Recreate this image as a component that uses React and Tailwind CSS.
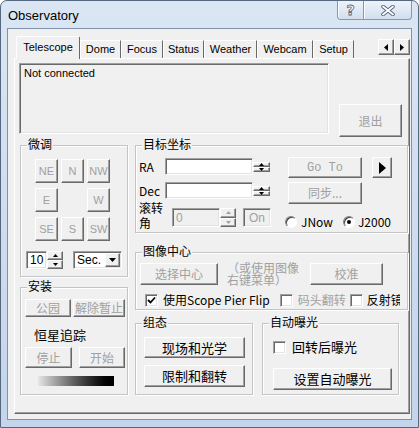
import React from "react";

const LAT = "font-['Liberation_Sans',Arial,sans-serif]";
const CJK = "font-['Noto_Sans_CJK_SC','Liberation_Sans',sans-serif]";

function Raised({ className = "", children }) {
  return (
    <div
      className={`flex items-center justify-center border border-t-white border-l-white border-r-[#696969] border-b-[#696969] bg-[#f0f0f0] shadow-[inset_-1px_-1px_0_#a0a0a0] ${className}`}
    >
      {children}
    </div>
  );
}

function Sunken({ className = "", children }) {
  return (
    <div
      className={`border border-t-[#a0a0a0] border-l-[#a0a0a0] border-r-white border-b-white shadow-[inset_1px_1px_0_#696969,inset_-1px_-1px_0_#e3e3e3] ${className}`}
    >
      {children}
    </div>
  );
}

function Spinner({ className = "", color = "#000" }) {
  return (
    <div className={`flex flex-col ${className}`}>
      <Raised className="flex-1">
        <svg width="5" height="3" viewBox="0 0 5 3">
          <path d="M0 3 L2.5 0 L5 3Z" fill={color} />
        </svg>
      </Raised>
      <Raised className="flex-1">
        <svg width="5" height="3" viewBox="0 0 5 3">
          <path d="M0 0 L2.5 3 L5 0Z" fill={color} />
        </svg>
      </Raised>
    </div>
  );
}

function Check({ checked = false }) {
  return (
    <Sunken className="flex h-[13px] w-[13px] shrink-0 items-center justify-center bg-white">
      {checked && (
        <svg width="9" height="9" viewBox="0 0 9 9">
          <path d="M1 4 L3.5 6.5 L8 1.5" stroke="#000" strokeWidth="1.8" fill="none" />
        </svg>
      )}
    </Sunken>
  );
}

function Radio({ checked = false }) {
  return (
    <div className="flex h-[12px] w-[12px] shrink-0 items-center justify-center rounded-full border border-t-[#808080] border-l-[#808080] border-r-white border-b-white bg-white shadow-[inset_1px_1px_0_#404040]">
      {checked && <div className="h-[4px] w-[4px] rounded-full bg-black" />}
    </div>
  );
}

function Group({ label, className = "", children }) {
  return (
    <div
      className={`relative border border-[#c4c4c4] shadow-[inset_1px_1px_0_#fff,1px_1px_0_#fff] ${className}`}
    >
      <div
        className={`absolute left-[6px] top-[-10px] bg-[#f0f0f0] px-[1px] text-[12px] leading-[16px] text-black ${CJK}`}
      >
        {label}
      </div>
      {children}
    </div>
  );
}

const dis = "text-[#a0a0a0]";

function Tab({ label, w }) {
  return (
    <div
      className={`flex h-[18px] items-start justify-center border-t border-l border-r border-t-white border-l-white border-r-[#696969] pt-[2px] text-[11px] leading-[13px] ${w}`}
    >
      {label}
    </div>
  );
}

export default function App() {
  return (
    <div className="flex h-[428px] w-[419px] flex-col rounded-t-[7px] border border-[#56687f] bg-linear-to-b from-[#dbe6f4] to-[#c4d4ea] px-[6px] pb-[7px] text-black">
      {/* title bar */}
      <div className="-mx-[6px] flex h-[27px] items-start">
        <div className={`ml-[7px] mt-[7px] text-[13px] leading-[15px] ${LAT}`}>Observatory</div>
        <div className="ml-auto mr-[6px] flex">
          <div className="flex h-[19px] w-[27px] items-center justify-center rounded-bl-[4px] border border-t-0 border-[#8797b0] bg-linear-to-b from-[#eef3fa] to-[#d3dfee] shadow-[inset_1px_0_0_#f8fbff]">
            <span className="font-['DejaVu_Sans',sans-serif] text-[14px] font-bold leading-[14px] text-white [-webkit-text-stroke:0.8px_#55657e]">
              ?
            </span>
          </div>
          <div className="flex h-[19px] w-[48px] items-center justify-center rounded-br-[4px] border border-t-0 border-l-0 border-[#8797b0] bg-linear-to-b from-[#eef3fa] to-[#d3dfee] shadow-[inset_1px_0_0_#f8fbff]">
            <svg width="14" height="11" viewBox="0 0 14 11">
              <path d="M2 1.5 L12 9.5 M12 1.5 L2 9.5" stroke="#55657e" strokeWidth="3.6" strokeLinecap="round" />
              <path d="M2 1.5 L12 9.5 M12 1.5 L2 9.5" stroke="#ffffff" strokeWidth="1.8" strokeLinecap="round" />
            </svg>
          </div>
        </div>
      </div>

      {/* client */}
      <div className="flex flex-1 flex-col border border-[#7f91ab] bg-[#f0f0f0] pl-[6px] pt-[7px]">
        {/* tab strip */}
        <div className={`flex h-[22px] w-[396px] items-end ${LAT}`}>
          <div className="relative z-10 mb-[-1px] ml-[2px] flex h-[23px] w-[64px] items-start justify-center rounded-t-[2px] border-t border-l border-r border-t-white border-l-white border-r-[#696969] bg-[#f0f0f0] pt-[4px] text-[11px] leading-[13px]">
            Telescope
          </div>
          <Tab label="Dome" w="w-[41px]" />
          <Tab label="Focus" w="w-[42px]" />
          <Tab label="Status" w="w-[41px]" />
          <Tab label="Weather" w="w-[53px]" />
          <Tab label="Webcam" w="w-[56px]" />
          <Tab label="Setup" w="w-[41px]" />
          <div className="mb-[3px] ml-auto flex">
            <Raised className="h-[16px] w-[16px]">
              <svg width="4" height="7" viewBox="0 0 4 7">
                <path d="M4 0 L0 3.5 L4 7Z" fill="#000" />
              </svg>
            </Raised>
            <Raised className="h-[16px] w-[16px]">
              <svg width="4" height="7" viewBox="0 0 4 7">
                <path d="M0 0 L4 3.5 L0 7Z" fill="#000" />
              </svg>
            </Raised>
          </div>
        </div>

        {/* panel */}
        <div className="flex h-[356px] w-[396px] flex-col border border-t-white border-l-white border-r-[#696969] border-b-[#696969] shadow-[inset_-1px_-1px_0_#a0a0a0]">
          {/* row 1 */}
          <div className="flex h-[79px] items-start">
            <Sunken className={`ml-[4px] mt-[4px] h-[71px] w-[310px] px-[4px] pt-[2px] text-[11px] leading-[14px] ${LAT}`}>
              Not connected
            </Sunken>
            <Raised className={`ml-[10px] mt-[45px] h-[33px] w-[63px] text-[12px] ${dis} ${CJK}`}>退出</Raised>
          </div>

          {/* row 2 */}
          <div className="ml-[5px] flex gap-[7px]">
            {/* left column */}
            <div className="flex w-[108px] flex-col">
              <Group label="微调" className="mt-[7px] h-[132px]">
                <div className={`ml-[14px] mt-[13px] grid grid-cols-[23px_23px_23px] grid-rows-[24px_24px_24px] gap-x-[3px] gap-y-[5px] text-[11px] ${dis} ${LAT}`}>
                  <Raised>NE</Raised>
                  <Raised>N</Raised>
                  <Raised>NW</Raised>
                  <Raised>E</Raised>
                  <div />
                  <Raised>W</Raised>
                  <Raised>SE</Raised>
                  <Raised>S</Raised>
                  <Raised>SW</Raised>
                </div>
                <div className={`ml-[5px] mt-[10px] flex h-[18px] text-[12px] ${LAT}`}>
                  <Sunken className="flex w-[21px] items-center bg-white pl-[3px] leading-[14px]">10</Sunken>
                  <Spinner className="w-[16px]" />
                  <Sunken className="ml-[10px] flex w-[49px] items-center bg-white pl-[3px] leading-[14px]">
                    Sec.
                    <Raised className="my-[1px] ml-auto mr-[1px] h-[14px] w-[15px]">
                      <svg width="7" height="4" viewBox="0 0 7 4">
                        <path d="M0 0 L3.5 4 L7 0Z" fill="#000" />
                      </svg>
                    </Raised>
                  </Sunken>
                </div>
              </Group>

              <Group label="安装" className="mt-[10px] h-[108px]">
                <div className={`ml-[4px] mt-[11px] flex gap-[2px] text-[12px] ${dis} ${CJK}`}>
                  <Raised className="h-[18px] w-[46px]">公园</Raised>
                  <Raised className="h-[18px] w-[52px]">解除暂止</Raised>
                </div>
                <div className={`ml-[13px] mt-[10px] text-[13px] leading-[16px] ${CJK}`}>恒星追踪</div>
                <div className={`ml-[4px] mt-[4px] flex gap-[7px] text-[12px] ${dis} ${CJK}`}>
                  <Raised className="h-[21px] w-[47px]">停止</Raised>
                  <Raised className="h-[21px] w-[46px]">开始</Raised>
                </div>
                <div className="ml-[17px] mt-[8px] h-[10px] w-[76px] bg-linear-to-r from-[#e6e6e6] to-black" />
              </Group>
            </div>

            {/* right column */}
            <div className="flex w-[273px] flex-col">
              <Group label="目标坐标" className="mt-[7px] flex h-[88px]">
                <div className={`ml-[3px] flex w-[133px] flex-col text-[12px] ${CJK}`}>
                  <div className="mt-[12px] flex h-[17px] items-center">
                    <span className="w-[26px] leading-[14px]">RA</span>
                    <Sunken className="h-full w-[88px] bg-white" />
                    <Spinner className="w-[17px]" />
                  </div>
                  <div className="mt-[7px] flex h-[17px] items-center">
                    <span className="w-[26px] leading-[14px]">Dec</span>
                    <Sunken className="h-full w-[88px] bg-white" />
                    <Spinner className="w-[17px]" />
                  </div>
                  <div className="mt-[1px] flex h-[30px] items-start">
                    <div className="flex w-[33px] flex-col">
                      <span className="leading-[15px]">滚转</span>
                      <span className="leading-[15px]">角</span>
                    </div>
                    <Sunken className={`mt-[8px] flex h-[19px] w-[48px] items-center pl-[3px] ${dis} ${LAT}`}>0</Sunken>
                    <Spinner className="mt-[8px] h-[19px] w-[16px]" color="#a0a0a0" />
                    <Sunken className={`ml-[7px] mt-[8px] flex h-[19px] w-[28px] items-center justify-center ${dis} ${LAT}`}>On</Sunken>
                  </div>
                </div>
                <div className="ml-[13px] flex flex-col">
                  <div className="ml-[3px] mt-[11px] flex">
                    <Raised className={`h-[21px] w-[74px] text-[12px] ${dis} font-['Liberation_Mono',monospace]`}>Go To</Raised>
                    <Raised className="ml-[10px] h-[21px] w-[20px]">
                      <svg width="7" height="12" viewBox="0 0 7 12">
                        <path d="M0 0 L7 6 L0 12Z" fill="#000" />
                      </svg>
                    </Raised>
                  </div>
                  <Raised className={`ml-[3px] mt-[4px] h-[22px] w-[74px] text-[12px] ${dis} ${CJK}`}>同步...</Raised>
                  <div className={`mt-[11px] flex items-center text-[12px] leading-[14px] ${CJK}`}>
                    <Radio />
                    <span className="ml-[4px]">JNow</span>
                    <div className="ml-[10px]">
                      <Radio checked />
                    </div>
                    <span className="ml-[3px]">J2000</span>
                  </div>
                </div>
              </Group>

              <Group label="图像中心" className="mt-[19px] h-[58px]">
                <div className={`mt-[10px] flex h-[22px] text-[12px] ${CJK}`}>
                  <Raised className={`ml-[4px] w-[78px] ${dis}`}>选择中心</Raised>
                  <div className={`-mt-[1px] ml-[9px] flex w-[75px] flex-col text-[12px] ${dis}`}>
                    <span className="leading-[12px]">（或使用图像</span>
                    <span className="leading-[12px]">右键菜单）</span>
                  </div>
                  <Raised className={`ml-[8px] w-[73px] ${dis}`}>校准</Raised>
                </div>
                <div className={`mt-[8px] flex items-center text-[12px] leading-[14px] ${CJK}`}>
                  <div className="ml-[9px]">
                    <Check checked />
                  </div>
                  <span className="ml-[5px]">使用Scope Pier Flip</span>
                  <div className="ml-[10px]">
                    <Check />
                  </div>
                  <span className={`ml-[5px] ${dis}`}>码头翻转</span>
                  <div className="ml-[4px]">
                    <Check />
                  </div>
                  <span className="ml-[4px] w-[33px] overflow-hidden whitespace-nowrap">反射镜</span>
                </div>
              </Group>

              <div className="mt-[13px] flex gap-[9px]">
                <Group label="组态" className="h-[72px] w-[118px]">
                  <div className={`ml-[8px] flex flex-col text-[13px] ${CJK}`}>
                    <Raised className="mt-[13px] h-[21px] w-[101px]">现场和光学</Raised>
                    <Raised className="mt-[7px] h-[22px] w-[101px]">限制和翻转</Raised>
                  </div>
                </Group>
                <Group label="自动曝光" className="h-[72px] w-[137px]">
                  <div className={`ml-[10px] mt-[16px] flex items-center text-[13px] leading-[14px] ${CJK}`}>
                    <Check />
                    <span className="ml-[6px]">回转后曝光</span>
                  </div>
                  <Raised className={`ml-[10px] mt-[14px] h-[22px] w-[119px] text-[13px] ${CJK}`}>设置自动曝光</Raised>
                </Group>
              </div>
            </div>
          </div>
        </div>
      </div>
    </div>
  );
}
